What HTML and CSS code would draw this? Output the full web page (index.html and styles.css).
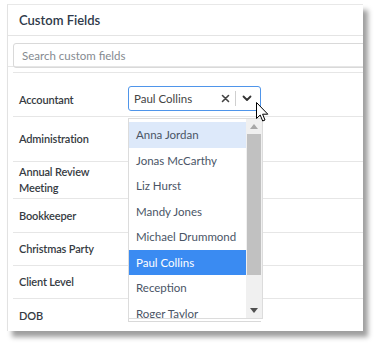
FILE: index.html
```html
<!DOCTYPE html>
<html>
<head>
<meta charset="utf-8">
<link rel="stylesheet" href="styles.css">
</head>
<body>
<div class="card">
  <div class="card-header">Custom Fields</div>
  <div class="search-wrap">
    <div class="search">Search custom fields</div>
  </div>
  <div class="table">
    <div class="row row-acc">
      <div class="label">Accountant</div>
      <div class="value">
        <div class="select">
          <span class="select-text">Paul Collins</span>
          <span class="clear">
            <svg width="9" height="9" viewBox="0 0 9 9"><path d="M1.5 1.5 L7.5 7.5 M7.5 1.5 L1.5 7.5" stroke="#444" stroke-width="1.6" stroke-linecap="round"/></svg>
          </span>
          <span class="sep"></span>
          <span class="chev">
            <svg width="10" height="7" viewBox="0 0 10 7"><path d="M1.5 1.5 L5 5 L8.5 1.5" fill="none" stroke="#333" stroke-width="1.8" stroke-linecap="round" stroke-linejoin="round"/></svg>
          </span>
        </div>
      </div>
    </div>
    <div class="row row-adm"><div class="label">Administration</div><div class="value"></div></div>
    <div class="row row-arm"><div class="label">Annual Review<br>Meeting</div><div class="value"></div></div>
    <div class="row row-bk"><div class="label">Bookkeeper</div><div class="value"></div></div>
    <div class="row row-cp"><div class="label">Christmas Party</div><div class="value"></div></div>
    <div class="row row-cl"><div class="label">Client Level</div><div class="value"></div></div>
    <div class="row row-dob"><div class="label">DOB</div><div class="value"><div class="date">Date</div></div></div>
  </div>

  <div class="menu">
    <div class="menu-list">
      <div class="opt opt-hover">Anna Jordan</div>
      <div class="opt">Jonas McCarthy</div>
      <div class="opt">Liz Hurst</div>
      <div class="opt">Mandy Jones</div>
      <div class="opt">Michael Drummond</div>
      <div class="opt opt-selected">Paul Collins</div>
      <div class="opt">Reception</div>
      <div class="opt">Roger Taylor</div>
    </div>
    <div class="scrollbar">
      <div class="sb-arrow">
        <svg width="8" height="5" viewBox="0 0 8 5"><path d="M0 5 L4 0 L8 5 Z" fill="#a8a8a8"/></svg>
      </div>
      <div class="sb-thumb"></div>
      <div class="sb-track"></div>
      <div class="sb-arrow">
        <svg width="8" height="5" viewBox="0 0 8 5"><path d="M0 0 L8 0 L4 5 Z" fill="#505050"/></svg>
      </div>
    </div>
  </div>
</div>

<svg class="cursor" width="13" height="21" viewBox="0 0 13 21">
  <path d="M0.5 0.5 L0.5 16.5 L4.2 13 L6.7 19 L9 18 L6.6 12.2 L11.8 12.2 Z" fill="#fff" stroke="#000" stroke-width="1" stroke-linejoin="miter"/>
</svg>
</body>
</html>
```

FILE: styles.css
```css
html, body {
  margin: 0;
  padding: 0;
  background: #ffffff;
}

body {
  font-family: Lato, "Open Sans", sans-serif;
  color: #333;
  position: relative;
  width: 379px;
  height: 346px;
  overflow: hidden;
}

.card {
  position: relative;
  margin: 4px 0 0 7px;
  width: 356px;
  height: 327px;
  background: #fff;
  border-left: 1px solid #e2e2e2;
  border-top: 1px solid #e8e8e8;
  box-shadow: 5px 6px 5px rgba(0, 0, 0, 0.38);
  overflow: hidden;
  box-sizing: border-box;
}

.card-header {
  height: 30px;
  padding-left: 11px;
  display: flex;
  align-items: center;
  font-size: 13px;
  font-weight: 600;
  color: #2f3a4a;
  border-bottom: 1px solid #e4e4e4;
}

.search-wrap {
  padding: 7px 0 0 5px;
  height: 31px;
  box-sizing: border-box;
  border-bottom: 1px solid #e6e6e6;
}

.search {
  width: 380px;
  height: 25px;
  box-sizing: border-box;
  border: 1px solid #d9d9d9;
  border-radius: 3px;
  padding-left: 8px;
  display: flex;
  align-items: center;
  font-size: 11.5px;
  color: #858a90;
}

.table {
  margin-left: 5px;
  margin-top: 5px;
  border-top: 1px solid #e6e6e6;
}

.row {
  display: grid;
  grid-template-columns: 115px 1fr;
  border-top: 1px solid #e6e6e6;
}
.row:first-child { border-top: none; }

.label {
  padding-left: 6px;
  font-size: 11px;
  font-weight: 600;
  letter-spacing: -0.15px;
  color: #363b42;
  display: flex;
  align-items: center;
  line-height: 16px;
}

.row-acc { height: 43px; }
.row-acc .label { padding-top: 10px; }
.row-acc .value { padding-top: 13px; }
.row-adm { height: 44px; }
.row-arm { height: 36px; }
.row-bk { height: 33px; }
.row-cp { height: 32px; }
.row-cl { height: 32px; }
.row-dob { height: 33px; }

.select {
  width: 133px;
  height: 25px;
  box-sizing: border-box;
  border: 1.5px solid #4f95ea;
  border-radius: 3px;
  display: flex;
  align-items: center;
  padding-left: 5px;
  font-size: 11.5px;
  color: #444;
}
.select-text { flex: 1; }
.clear { display: flex; width: 11px; }
.sep {
  width: 1px;
  height: 15px;
  background: #cfcfcf;
  margin: 0 6px 0 3px;
}
.chev { display: flex; width: 10px; margin-right: 8px; }

.date {
  margin-top: 8px;
  width: 133px;
  height: 15px;
  border-bottom: 1px solid #d9d9d9;
  border-left: 1px solid #d9d9d9;
  font-size: 11.5px;
  color: #777;
  padding-left: 6px;
  box-sizing: border-box;
}

.menu {
  position: absolute;
  left: 120px;
  top: 113px;
  width: 135px;
  height: 201px;
  box-sizing: border-box;
  border: 1px solid #dcdcdc;
  background: #fff;
  display: flex;
  padding-top: 3px;
  overflow: hidden;
}
.menu-list { flex: 1; }
.opt {
  height: 25.5px;
  display: flex;
  align-items: center;
  padding-left: 7px;
  font-size: 11.5px;
  color: #4a5566;
  white-space: nowrap;
}
.opt-hover { background: #dde9fa; }
.opt-selected { background: #3a8bf2; color: #fff; }

.scrollbar {
  width: 16px;
  display: flex;
  flex-direction: column;
  background: #f0f0f0;
  margin-top: -3px;
}
.sb-arrow {
  height: 15px;
  display: flex;
  align-items: center;
  justify-content: center;
}
.sb-thumb {
  height: 141px;
  background: #c1c1c1;
  margin: 0 1px;
}
.sb-track { flex: 1; }

.cursor {
  position: absolute;
  left: 256px;
  top: 102px;
}
```
